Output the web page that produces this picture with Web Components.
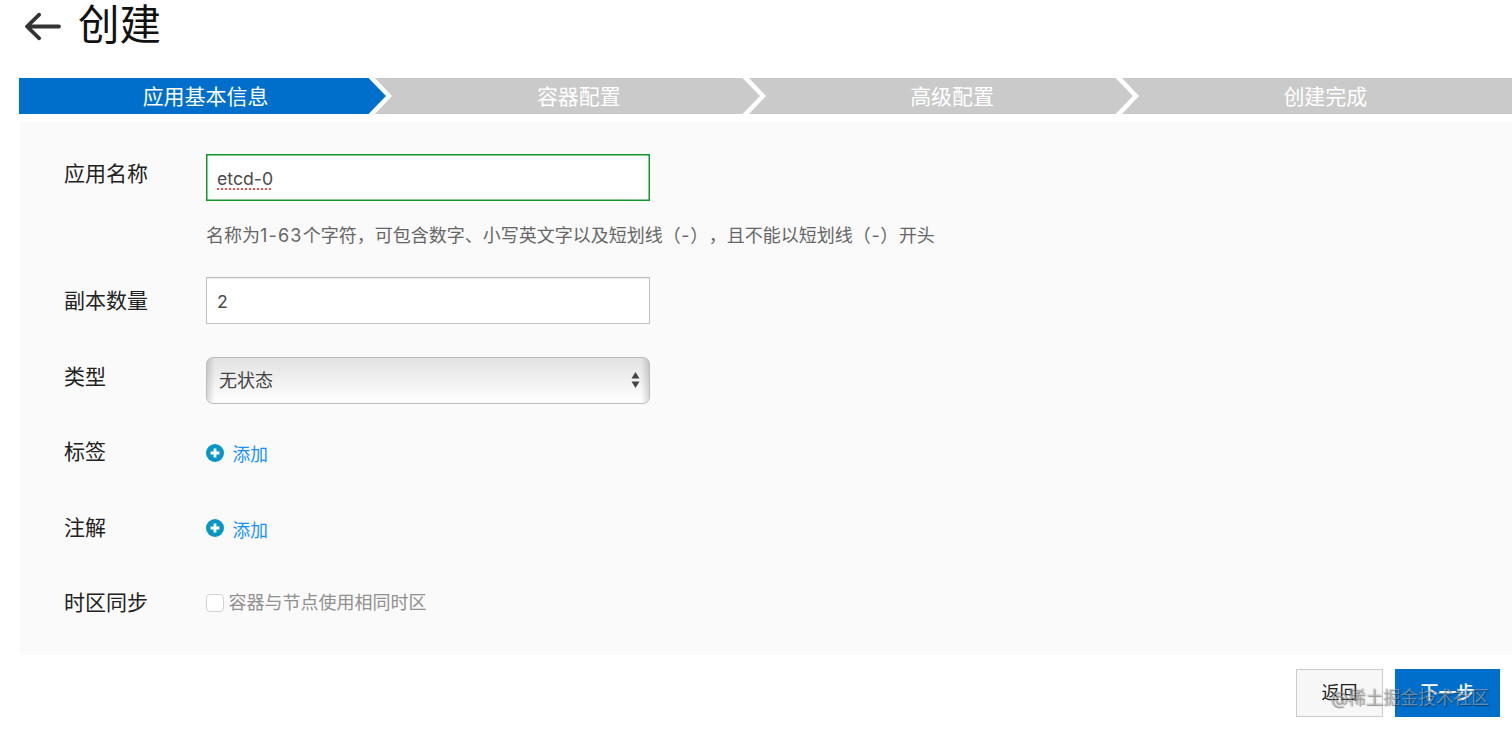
<!DOCTYPE html>
<html lang="zh-CN">
<head>
<meta charset="utf-8">
<title>创建</title>
<style>
    html, body {
        margin: 0;
        height: 100%;
        overflow: hidden;
        background: #fff;
        font-family: Inter, "Noto Sans CJK SC", sans-serif;
        text-spacing-trim: space-all;
    }
    help-text b { font-weight: 400; letter-spacing: 1.2px; }
    help-text span { letter-spacing: .6px; }
</style>
</head>
<body>
<create-page>
    <page-title slot="title">创建</page-title>
    <step-bar slot="steps">
        <step-item active>应用基本信息</step-item>
        <step-item>容器配置</step-item>
        <step-item>高级配置</step-item>
        <step-item last>创建完成</step-item>
    </step-bar>
    <form-row label="应用名称" style="--row-height: 123px; --label-top: 4px">
        <text-field valid>etcd-0</text-field>
        <help-text>名称为<b>1-63</b>个字符，可包含数字、小写英文字以及短划线<span>（-）</span>，且不能以短划线<span>（-）</span>开头</help-text>
    </form-row>
    <form-row label="副本数量">
        <text-field>2</text-field>
    </form-row>
    <form-row label="类型" style="--control-top: 4px">
        <select-field>无状态</select-field>
    </form-row>
    <form-row label="标签">
        <add-link>添加</add-link>
    </form-row>
    <form-row label="注解">
        <add-link>添加</add-link>
    </form-row>
    <form-row label="时区同步">
        <check-field>容器与节点使用相同时区</check-field>
    </form-row>
    <push-button slot="actions" style="width: 87px">返回</push-button>
    <push-button slot="actions" primary style="width: 105px">下一步</push-button>
    <water-mark slot="mark">@稀土掘金技术社区</water-mark>
</create-page>

<script>
(function () {
    function define (name, html) {
        const template = document.createElement("template");
        template.innerHTML = html;
        customElements.define(name, class extends HTMLElement {
            constructor () {
                super();
                this.attachShadow({mode: "open"});
                this.shadowRoot.appendChild(template.content.cloneNode(true));
            }
            connectedCallback () {
                var label = this.shadowRoot.getElementById("label");
                if (label && this.hasAttribute("label")) {
                    label.textContent = this.getAttribute("label");
                }
            }
        });
    }

    define("create-page", `
    <style>
        :host {
            display: flex;
            flex-direction: column;
            position: relative;
            height: 730px;
            overflow: hidden;
        }
        main {
            box-sizing: border-box;
            height: 533px;
            margin: 8px 0 0 20px;
            padding: 32px 0 0 44px;
            background: #fafafa;
        }
        footer {
            display: flex;
            justify-content: flex-end;
            gap: 12px;
            padding: 14px 12px 0 0;
        }
    </style>
    <slot name="title"></slot>
    <slot name="steps"></slot>
    <main><slot></slot></main>
    <footer><slot name="actions"></slot></footer>
    <slot name="mark"></slot>`);

    define("page-title", `
    <style>
        :host {
            display: flex;
            align-items: flex-start;
            height: 78px;
            padding-left: 24px;
            font-size: 41.5px;
            line-height: 50px;
            color: #111;
        }
        svg {
            width: 38px;
            height: 30px;
            margin: 11px 16px 0 0;
            fill: none;
            stroke: #333;
            stroke-width: 3.8;
            stroke-linecap: round;
            stroke-linejoin: round;
        }
    </style>
    <svg viewBox="0 0 38 30"><path d="M35 15.5H3M15.2 3.7L3 15.5L15.2 27.3"/></svg>
    <slot></slot>`);

    define("step-bar", `
    <style>
        :host {
            display: flex;
            height: 36px;
            margin-left: 19px;
        }
    </style>
    <slot></slot>`);

    define("step-item", `
    <style>
        :host {
            --fill: #cacaca;
            display: flex;
            flex: 1;
            justify-content: center;
            position: relative;
            background: var(--fill);
            font-size: 21px;
            line-height: 37px;
            color: #fff;
        }
        :host([active]) { --fill: #006fcb; }
        :host([last]) svg { display: none; }
        svg {
            position: absolute;
            top: 0;
            right: 0;
            width: 24px;
            height: 36px;
        }
    </style>
    <slot></slot>
    <svg viewBox="0 0 24 36">
        <rect width="24" height="36" fill="#cacaca"/>
        <path d="M0 0H7L24 18L7 36H0Z" fill="#fff"/>
        <path d="M0 0H.5L18 18L.5 36H0Z" style="fill: var(--fill)"/>
    </svg>`);

    define("form-row", `
    <style>
        :host {
            display: grid;
            grid-template-columns: 142px 1fr;
            height: var(--row-height, 75.5px);
        }
        #label {
            margin-top: calc(8px - var(--label-top, 0px));
            font-size: 21px;
            line-height: 32px;
            color: #222;
        }
        #control { margin-top: var(--control-top, 0); }
    </style>
    <div id="label"></div>
    <div id="control"><slot></slot></div>`);

    define("text-field", `
    <style>
        :host {
            display: block;
            box-sizing: border-box;
            width: 444px;
            height: 47px;
            padding-left: 10px;
            border: 1px solid #bfbfbf;
            background: #fff;
            box-shadow: inset 0 1px 1px rgba(0, 0, 0, .08);
            font-size: 17.7px;
            line-height: 47px;
            color: #4a4a4a;
        }
        :host([valid]) {
            border-color: #12962c;
            box-shadow: inset 0 0 0 .5px #12962c;
        }
        :host([valid]) span {
            text-decoration: underline dotted #ef5048 2px;
            text-underline-offset: 3px;
            text-decoration-skip-ink: none;
        }
    </style>
    <span><slot></slot></span>`);

    define("help-text", `
    <style>
        :host {
            display: block;
            margin-top: 20px;
            font-size: 18px;
            line-height: 30px;
            white-space: nowrap;
            color: #666;
        }
    </style>
    <slot></slot>`);

    define("select-field", `
    <style>
        :host {
            display: flex;
            align-items: center;
            justify-content: space-between;
            box-sizing: border-box;
            width: 444px;
            height: 47px;
            padding: 0 9px 0 12px;
            border: 1px solid #bcbcbc;
            border-radius: 7px;
            background:
                linear-gradient(to right, rgba(0, 0, 0, .14), transparent 8px, transparent calc(100% - 8px), rgba(0, 0, 0, .14)),
                linear-gradient(#e2e2e2, #fff);
            font-size: 18px;
            line-height: 45px;
            color: #444;
        }
        svg {
            width: 9px;
            height: 16px;
            fill: #444;
        }
    </style>
    <span><slot></slot></span>
    <svg viewBox="0 0 9 16"><path d="M.5 6.5L4.5 0L8.5 6.5ZM.5 9.5H8.5L4.5 16Z"/></svg>`);

    define("add-link", `
    <style>
        :host {
            display: flex;
            align-items: flex-start;
            gap: 8.5px;
            font-size: 17.7px;
            line-height: 30px;
            padding-top: 12px;
            color: #1890ff;
        }
        svg {
            width: 18px;
            height: 18px;
            margin-top: 3.5px;
        }
    </style>
    <svg viewBox="0 0 18 18">
        <circle cx="9" cy="9" r="9" fill="#0896c5"/>
        <path d="M9 4.6V13.4M4.6 9H13.4" stroke="#fff" stroke-width="2.8"/>
    </svg>
    <span><slot></slot></span>`);

    define("check-field", `
    <style>
        :host {
            display: flex;
            align-items: center;
            gap: 4.5px;
            padding-top: 8px;
            font-size: 18px;
            line-height: 32px;
            color: #909090;
        }
        i {
            box-sizing: border-box;
            width: 18px;
            height: 18px;
            border: 1px solid #d2d2d2;
            border-radius: 4px;
            background: #fff;
        }
    </style>
    <i></i><span><slot></slot></span>`);

    define("push-button", `
    <style>
        :host {
            display: block;
            box-sizing: border-box;
            height: 48px;
            border: 1px solid #ccc;
            background: #f7f7f7;
            font-size: 18px;
            line-height: 46px;
            text-align: center;
            color: #222;
        }
        :host([primary]) {
            border-color: #006fcb;
            background: #006fcb;
            font-weight: 500;
            color: #fff;
        }
    </style>
    <slot></slot>`);

    define("water-mark", `
    <style>
        :host {
            position: absolute;
            right: 23px;
            bottom: 17px;
            font-size: 17.7px;
            line-height: 30px;
            color: rgba(255, 255, 255, .4);
            text-shadow: 1px 1px 1px rgba(0, 0, 0, .4), 0 0 1px rgba(0, 0, 0, .3);
        }
    </style>
    <slot></slot>`);
})();
</script>
</body>
</html>
